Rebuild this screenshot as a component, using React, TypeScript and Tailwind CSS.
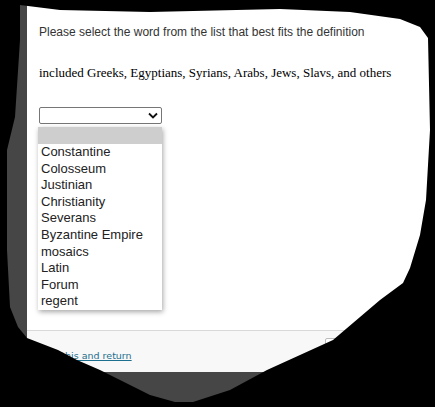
const options = [
  'Constantine',
  'Colosseum',
  'Justinian',
  'Christianity',
  'Severans',
  'Byzantine Empire',
  'mosaics',
  'Latin',
  'Forum',
  'regent',
];

// torn-screenshot outline: everything outside is black
const outline =
  'M20 5 L60 10 L150 12 L280 9 L350 12 L400 19 L420 27 L428 38 L430 130 L426 200 L420 235 L410 268 L403 283 L380 300 L333 340 L267 370 L230 390 L193 402 L175 402 L150 395 L100 370 L77 360 L58 350 L27 338 L18 327 L10 307 L7 250 L7 150 L15 117 L20 40 Z';

export default function App() {
  return (
    <div className="relative w-[435px] h-[407px] overflow-hidden bg-[#464646]">
      <div className="flex h-[372px]">
        <div className="w-[27px] shrink-0" />
        <div className="flex-1 flex flex-col bg-white">
          <div className="relative flex-1 pl-[12px] pt-[25px]">
            <p className="text-[12px] leading-[15px] text-[#333] font-['Liberation_Sans',Arial,sans-serif]">
              Please select the word from the list that best fits the definition
            </p>
            <p className="mt-[25px] text-[13px] leading-[16px] text-black font-['Liberation_Serif','Times_New_Roman',serif]">
              included Greeks, Egyptians, Syrians, Arabs, Jews, Slavs, and others
            </p>
            <div className="relative mt-[26px] w-[123px]">
              <div className="flex h-[17px] items-center justify-end rounded-[2px] border border-[#767676] bg-white pr-[3px]">
                <svg width="10" height="7" viewBox="0 0 10 7">
                  <path d="M1 1.5 L5 5.5 L9 1.5" fill="none" stroke="#111" strokeWidth="1.8" />
                </svg>
              </div>
              <div className="absolute left-[-1px] top-[20px] w-[124px] bg-white shadow-[1px_2px_5px_rgba(0,0,0,0.35)] font-['Liberation_Sans',Arial,sans-serif] text-[13px] text-[#222]">
                <div className="h-[17px] bg-[#cecece]" />
                {options.map(o => (
                  <div key={o} className="h-[16.6px] leading-[16.6px] pl-[3px]">
                    {o}
                  </div>
                ))}
              </div>
            </div>
          </div>
          <div className="relative h-[42px] border-t border-[#d9d9d9] bg-[#f8f8f8] pl-[8px] pt-[10px]">
            <a className="text-[9.5px] leading-[12px] text-[#1d6f8f] underline font-['DejaVu_Sans',Verdana,sans-serif]">
              Save this and return
            </a>
            <div className="absolute left-[298px] top-[7px] h-[24px] w-[60px] rounded-[2px] border border-[#bbb] bg-white" />
          </div>
        </div>
      </div>

      <svg className="absolute inset-0" width="435" height="407" viewBox="0 0 435 407">
        <path d={'M0 0 H435 V407 H0 Z ' + outline} fill="#000" fillRule="evenodd" />
      </svg>
    </div>
  );
}
